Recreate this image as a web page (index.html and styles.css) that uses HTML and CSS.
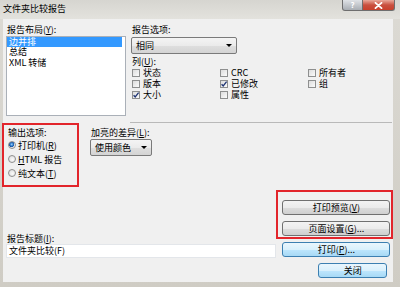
FILE: index.html
```html
<!DOCTYPE html>
<html>
<head>
<meta charset="utf-8">
<link rel="stylesheet" href="styles.css">
</head>
<body>
<div class="window">
  <div class="titlebar">
    <span class="title">文件夹比较报告</span>
    <div class="caption">
      <span class="cap help">?</span>
      <span class="cap close"><svg width="9" height="7" viewBox="0 0 9 7"><path d="M1.5 0.8 L7.5 6.2 M7.5 0.8 L1.5 6.2" stroke="#fff" stroke-width="1.8" stroke-linecap="round"/></svg></span>
    </div>
  </div>
  <div class="client">
    <div class="top">
      <div class="layout-col">
        <div class="label">报告布局(<u>Y</u>):</div>
        <div class="listbox">
          <div class="item sel">边并排</div>
          <div class="item">总结</div>
          <div class="item">XML 转储</div>
        </div>
      </div>
      <div class="opts-col">
        <div class="label">报告选项:</div>
        <div class="combo wide"><span>相同</span><span class="arrow"></span></div>
        <div class="label gap2">列(<u>U</u>):</div>
        <div class="checks">
          <div class="chk"><span class="box"></span><span>状态</span></div>
          <div class="chk"><span class="box"></span><span>CRC</span></div>
          <div class="chk"><span class="box"></span><span>所有者</span></div>
          <div class="chk"><span class="box"></span><span>版本</span></div>
          <div class="chk"><span class="box"><svg width="8" height="8" viewBox="0 0 8 8"><path d="M1.6 4.2 L3.2 6 L6.6 1.6" fill="none" stroke="#1f3473" stroke-width="1.3"/></svg></span><span>已修改</span></div>
          <div class="chk"><span class="box"></span><span>组</span></div>
          <div class="chk"><span class="box"><svg width="8" height="8" viewBox="0 0 8 8"><path d="M1.6 4.2 L3.2 6 L6.6 1.6" fill="none" stroke="#1f3473" stroke-width="1.3"/></svg></span><span>大小</span></div>
          <div class="chk"><span class="box"></span><span>属性</span></div>
        </div>
      </div>
    </div>
    <div class="sep"></div>
    <div class="middle">
      <div class="redbox output">
        <div class="label">输出选项:</div>
        <div class="radio"><span class="dot on"></span><span>打印机(<u>R</u>)</span></div>
        <div class="radio"><span class="dot"></span><span><u>H</u>TML 报告</span></div>
        <div class="radio"><span class="dot"></span><span>纯文本(<u>T</u>)</span></div>
      </div>
      <div class="hl-col">
        <div class="label">加亮的差异(<u>L</u>):</div>
        <div class="combo small"><span>使用颜色</span><span class="arrow"></span></div>
      </div>
    </div>
    <div class="bottom">
      <div class="title-col">
        <div class="label">报告标题(<u>I</u>):</div>
        <div class="input">文件夹比较(F)</div>
      </div>
      <div class="btn-col">
        <div class="redbox btns">
          <div class="btn">打印预览(<u>V</u>)</div>
          <div class="btn">页面设置(<u>G</u>)...</div>
        </div>
        <div class="btn blue print">打印(<u>P</u>)...</div>
        <div class="btn blue closebtn">关闭</div>
      </div>
    </div>
  </div>
</div>
</body>
</html>
```
FILE: styles.css
```css
body {
  margin: 0;
  width: 400px;
  height: 287px;
  overflow: hidden;
  background: linear-gradient(#dcdad4, #cfccc4);
  font-family: "Noto Sans CJK SC", "Noto Sans", sans-serif;
  font-size: 9px;
  color: #000;
}
.window {
  display: flex;
  flex-direction: column;
  height: 287px;
}
.titlebar {
  height: 19px;
  display: flex;
  align-items: flex-start;
  background: linear-gradient(#d6d5d0, #e3e2dd);
}
.title {
  margin-top: 3px;
  padding-left: 3px;
  line-height: 12px;
  font-size: 9px;
}
.caption {
  margin-left: auto;
  margin-right: 5px;
  display: flex;
}
.cap {
  height: 10px;
  display: flex;
  align-items: center;
  justify-content: center;
  border: 1px solid #6e6e6e;
  border-top: none;
}
.help {
  width: 19px;
  border-radius: 0 0 0 3px;
  background: linear-gradient(#dfe2e6, #a8adb3);
  color: #fff;
  font-weight: bold;
  font-size: 8px;
  line-height: 10px;
}
.close {
  width: 31px;
  border-left: none;
  border-radius: 0 0 3px 0;
  background: linear-gradient(#e9a99b, #c9503f 50%, #c8402c);
}
.client {
  margin-left: 3px;
  width: 390px;
  height: 263px;
  background: #f0f0f0;
}
.label {
  height: 11px;
  line-height: 11px;
  padding-left: 1px;
  white-space: nowrap;
}
.gap2 { margin-top: 2px; }
u { text-decoration-thickness: 1px; text-underline-offset: 1px; }

.top {
  display: flex;
  gap: 5px;
  height: 103px;
  box-sizing: border-box;
  padding: 5px 0 0 3px;
}
.layout-col { width: 120px; }
.listbox {
  margin-top: 1px;
  height: 80px;
  box-sizing: border-box;
  border: 1px solid #aab0b8;
  background: #fff;
}
.item {
  height: 10px;
  line-height: 10px;
  padding-left: 2px;
  margin-right: 3px;
}
.item.sel { background: #3399ff; color: #fff; }
.item + .item { height: 10.5px; line-height: 10.5px; }

.opts-col { flex: 1; }
.combo {
  margin-top: 2px;
  height: 17px;
  box-sizing: border-box;
  border: 1px solid #7a7a7a;
  border-radius: 2px;
  background: linear-gradient(#f4f4f4, #ebebeb 50%, #dfdfdf 51%, #d4d4d4);
  display: flex;
  align-items: center;
  justify-content: space-between;
  padding: 0 4px 0 4px;
  line-height: 15px;
}
.combo.wide { width: 106px; }
.combo.small { width: 62px; margin-top: 1px; }
.arrow {
  width: 0;
  height: 0;
  border-left: 3px solid transparent;
  border-right: 3px solid transparent;
  border-top: 3px solid #000;
}
.checks {
  display: grid;
  grid-template-columns: 88px 88px 80px;
  grid-auto-rows: 11px;
}
.chk {
  display: flex;
  align-items: center;
  gap: 3px;
  padding-left: 1px;
  white-space: nowrap;
}
.box {
  width: 8px;
  height: 8px;
  box-sizing: border-box;
  border: 1px solid #8e8f8f;
  background: linear-gradient(135deg, #dcdcdc, #fbfbfb);
  display: flex;
  align-items: center;
  justify-content: center;
}
.box svg { flex: none; }

.sep {
  margin-left: 127px;
  width: 262px;
  height: 1px;
  background: #b9b9b9;
}
.middle {
  display: flex;
  height: 64px;
}
.redbox {
  border: 2px solid #e2252b;
  box-sizing: border-box;
}
.output {
  margin-left: -1px;
  width: 77px;
  height: 64px;
  padding: 2px 0 0 3px;
}
.radio {
  height: 14px;
  display: flex;
  align-items: center;
  gap: 2px;
  white-space: nowrap;
}
.dot {
  width: 8px;
  height: 8px;
  margin-left: 1px;
  box-sizing: border-box;
  border-radius: 50%;
  border: 1px solid #8e8f8f;
  background: radial-gradient(circle at 60% 60%, #fafafa, #d8d8d8);
}
.dot.on {
  background: radial-gradient(circle at 45% 40%, #9fd0f7 0, #2a77c9 1.6px, #1b4f96 2.6px, #e6e6e6 2.8px, #f6f6f6);
}
.hl-col {
  margin-left: 11px;
  padding-top: 4px;
}

.bottom {
  display: flex;
  height: 95px;
}
.title-col {
  width: 271px;
  margin-left: 3px;
  padding-top: 46px;
}
.input {
  height: 14px;
  box-sizing: border-box;
  border: 1px solid #e3e6ea;
  background: #fff;
  line-height: 12px;
  padding-left: 2px;
}
.btn-col {
  width: 117px;
}
.btns {
  margin-top: 3px;
  height: 49px;
  padding: 8px 0 0 4px;
  display: flex;
  flex-direction: column;
  gap: 6px;
}
.btn {
  width: 108px;
  height: 15px;
  box-sizing: border-box;
  border: 1px solid #707070;
  border-radius: 3px;
  background: linear-gradient(#f3f3f3, #ebebeb 50%, #dddddd 51%, #cfcfcf);
  text-align: center;
  line-height: 13px;
  white-space: nowrap;
}
.btn.blue {
  border-color: #3c7fb1;
  background: linear-gradient(#eaf6fd, #d9f0fc 50%, #bee6fd 51%, #a7d9f5);
}
.print {
  margin-top: 3px;
  margin-left: 6px;
}
.closebtn {
  margin-top: 6px;
  margin-left: 42px;
  width: 69px;
}
```
